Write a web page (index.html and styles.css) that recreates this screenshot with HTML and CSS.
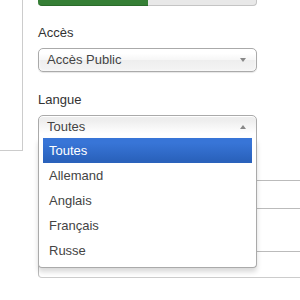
FILE: index.html
```html
<!DOCTYPE html>
<html lang="fr">
<head>
  <meta charset="UTF-8">
  <title>Options</title>
  <link rel="stylesheet" href="styles.css">
</head>
<body>

  <div class="page">
    <div class="side-panel"></div>

    <div class="main">
      <div class="btn-group">
        <span class="btn btn-yes"></span>
        <span class="btn btn-no"></span>
      </div>

      <div class="control-group">
        <label class="control-label">Accès</label>
        <div class="chosen">
          <div class="chosen-single">
            <span>Accès Public</span>
            <i class="arrow arrow-down"></i>
          </div>
        </div>
      </div>

      <div class="control-group">
        <label class="control-label">Langue</label>
        <div class="chosen with-drop">
          <div class="chosen-single">
            <span>Toutes</span>
            <i class="arrow arrow-up"></i>
          </div>
          <div class="chosen-drop">
            <ul class="chosen-results">
              <li class="highlighted">Toutes</li>
              <li>Allemand</li>
              <li>Anglais</li>
              <li>Français</li>
              <li>Russe</li>
            </ul>
          </div>
        </div>
      </div>

      <div class="lower-box">
        <div class="row row-first"></div>
        <div class="row row-second"></div>
        <div class="row row-last"></div>
      </div>
    </div>
  </div>

</body>
</html>
```

FILE: styles.css
```css
body {
  margin: 0;
  padding: 0;
  background-color: #fff;
  font-family: "Liberation Sans", Arial, sans-serif;
  font-size: 13px;
  color: #333;
  overflow: hidden;
}

.page {
  display: flex;
  width: 300px;
  height: 300px;
  overflow: hidden;
}

.side-panel {
  flex-shrink: 0;
  width: 22px;
  height: 150px;
  border-right: 1px solid #ccc;
  border-bottom: 1px solid #ccc;
}

.main {
  flex: 1;
  margin-left: 15px;
  min-width: 0;
}

/* yes / no buttons, cut off at the top */
.btn-group {
  display: flex;
  width: 219px;
  height: 6px;
  margin-bottom: 18px;
}

.btn {
  display: block;
  height: 5px;
}

.btn-yes {
  width: 110px;
  background-color: #357f35;
  border-bottom: 1px solid #2a6b2a;
  border-bottom-left-radius: 4px;
}

.btn-no {
  flex: 1;
  background-color: #e8e8e8;
  border: 1px solid #c4c4c4;
  border-top: 0;
  border-left: 0;
  border-bottom-right-radius: 4px;
}

.control-group {
  width: 219px;
  margin-bottom: 19px;
}

.control-label {
  display: block;
  line-height: 18px;
  margin-bottom: 6px;
}

.chosen {
  position: relative;
}

.chosen-single {
  display: flex;
  align-items: center;
  justify-content: space-between;
  box-sizing: border-box;
  height: 24px;
  padding: 0 10px 0 8px;
  border: 1px solid #aaa;
  border-radius: 5px;
  background-image: linear-gradient(#fff 20%, #f6f6f6 50%, #eee 52%, #f4f4f4 100%);
  box-shadow: 0 0 3px #fff inset, 0 1px 1px rgba(0, 0, 0, 0.1);
  color: #444;
  line-height: 22px;
}

.arrow {
  display: block;
  width: 0;
  height: 0;
  border-left: 3px solid transparent;
  border-right: 3px solid transparent;
}

.arrow-down {
  border-top: 4px solid #888;
}

.arrow-up {
  border-bottom: 4px solid #888;
}

.with-drop .chosen-single {
  border-bottom-left-radius: 0;
  border-bottom-right-radius: 0;
  background-image: linear-gradient(#eee 20%, #fff 80%);
  box-shadow: 0 1px 0 #fff inset;
}

.chosen-drop {
  position: absolute;
  top: 100%;
  left: 0;
  right: 0;
  z-index: 10;
  margin-top: -1px;
  background-color: #fff;
  border: 1px solid #aaa;
  border-top: 0;
  border-radius: 0 0 4px 4px;
  box-shadow: 0 4px 5px rgba(0, 0, 0, 0.15);
}

.chosen-results {
  list-style: none;
  margin: 0 4px 4px 0;
  padding: 0 0 0 4px;
}

.chosen-results li {
  padding: 5px 6px;
  line-height: 15px;
  color: #444;
}

.chosen-results li.highlighted {
  background-color: #3875d7;
  background-image: linear-gradient(#3875d7 20%, #2a62bc 90%);
  color: #fff;
}

/* fields behind the open list */
.lower-box {
  margin-top: 41px;
  margin-right: -12px;
  border: 1px solid #bbb;
  border-bottom-color: #ccc;
  border-radius: 4px;
}

.row-first {
  height: 27px;
  border-bottom: 1px solid #bbb;
}

.row-second {
  height: 42px;
  border-bottom: 1px solid #bbb;
}

.row-last {
  height: 25px;
}
```
